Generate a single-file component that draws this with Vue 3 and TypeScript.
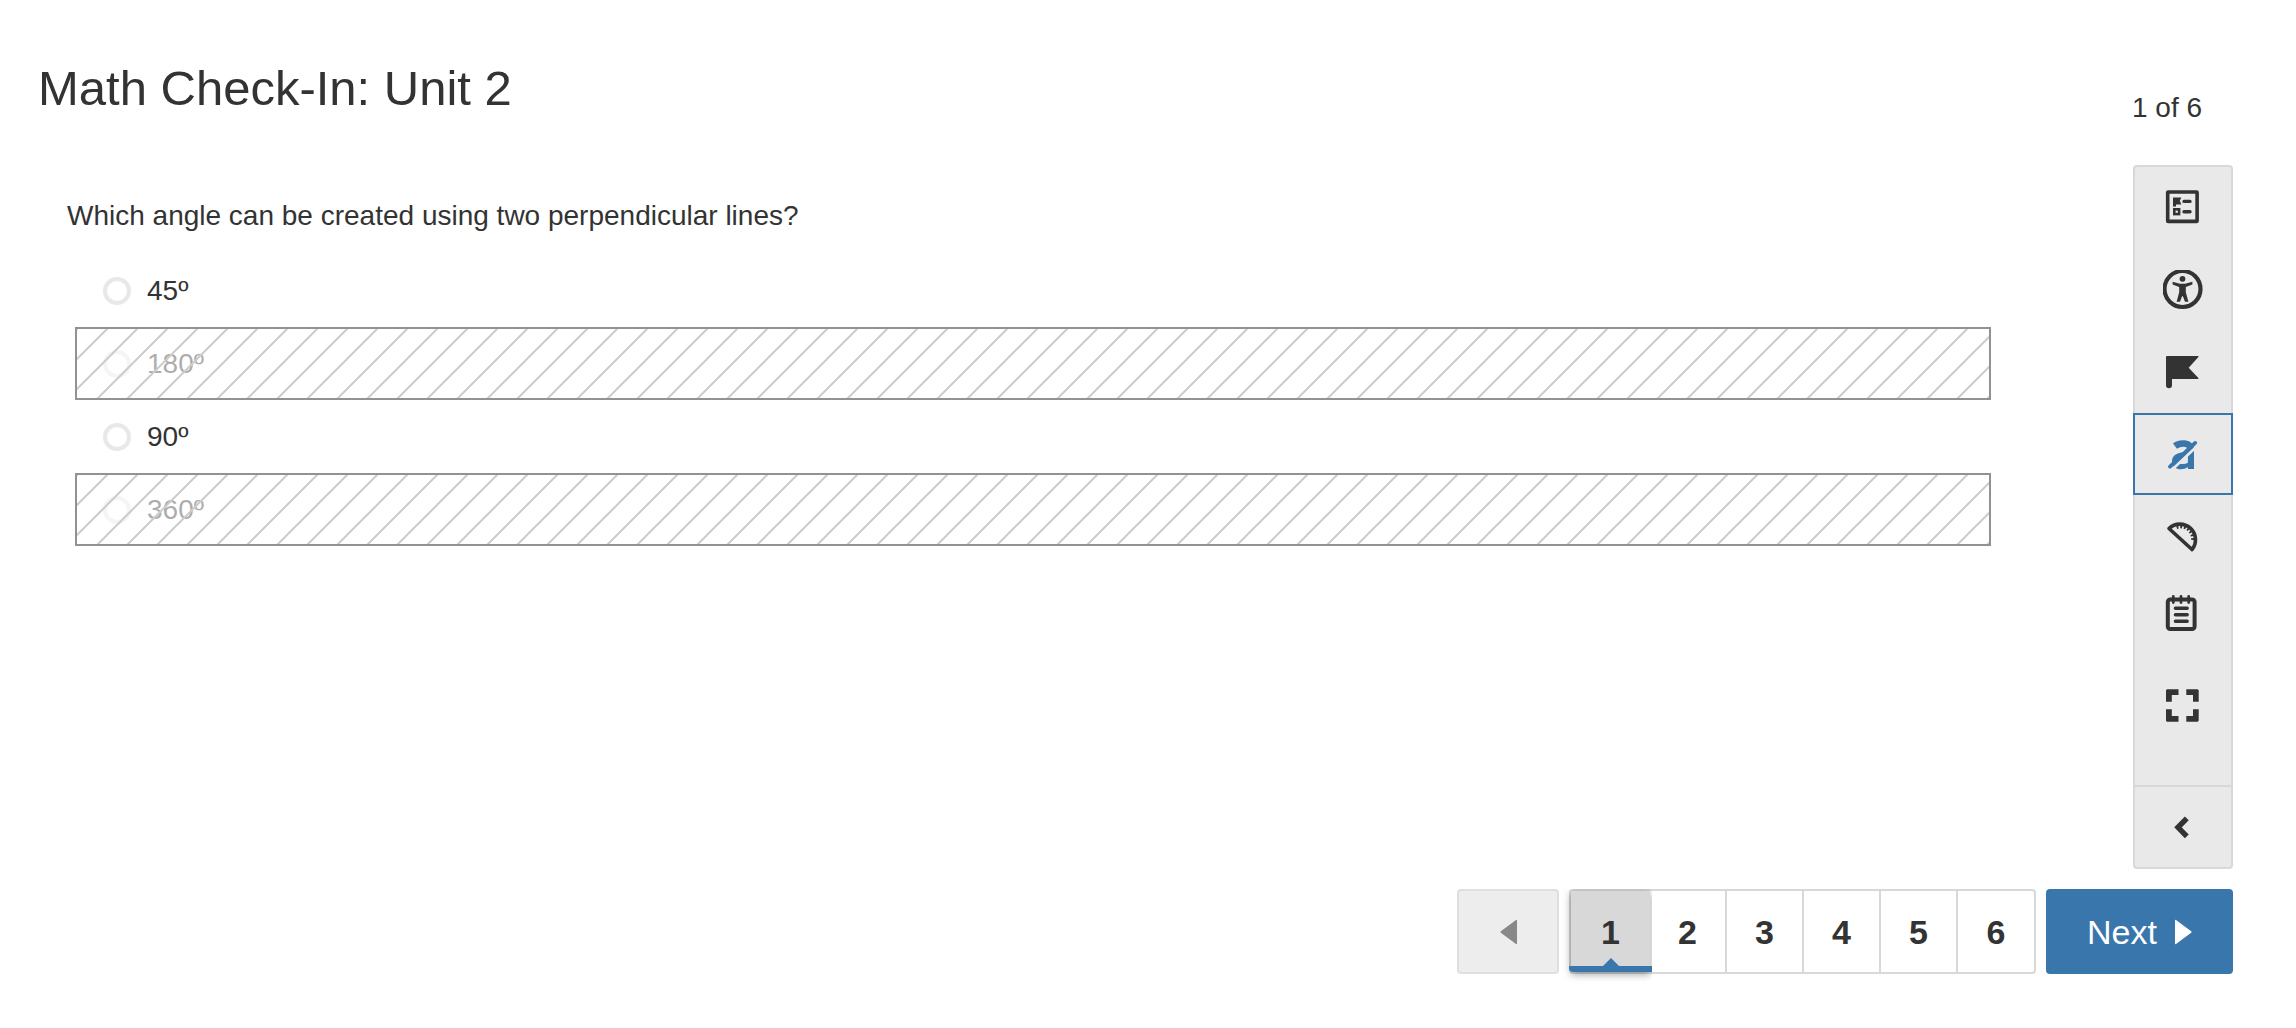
<script setup lang="ts">
import { ref } from 'vue'

interface Option {
  label: string
  eliminated: boolean
}

const options: Option[] = [
  { label: '45º', eliminated: false },
  { label: '180º', eliminated: true },
  { label: '90º', eliminated: false },
  { label: '360º', eliminated: true },
]

const total = 6
const current = ref(1)
const answer = ref('')
const eliminating = ref(true)
</script>

<template>
  <div class="page">
    <header class="header">
      <h1 class="title">Math Check-In: Unit 2</h1>
      <p class="progress">{{ current }} of {{ total }}</p>
    </header>

    <div class="body">
      <main class="question">
        <p id="prompt" class="prompt">Which angle can be created using two perpendicular lines?</p>
        <div class="options" role="radiogroup" aria-labelledby="prompt">
          <label
            v-for="(option, i) in options"
            :key="option.label"
            class="option"
            :class="{ eliminated: option.eliminated }"
          >
            <input
              v-model="answer"
              class="radio"
              type="radio"
              name="answer"
              :value="option.label"
              :disabled="option.eliminated"
            />
            <span class="option-text">{{ option.label }}</span>
            <svg v-if="option.eliminated" class="hatch" aria-hidden="true">
              <defs>
                <pattern :id="'hatch-' + i" width="30" height="30" patternUnits="userSpaceOnUse">
                  <path d="M-3 33L33 -3M-3 3L3 -3M27 33L33 27" stroke="#ccc" stroke-width="2" />
                </pattern>
              </defs>
              <rect width="100%" height="100%" :fill="'url(#hatch-' + i + ')'" />
            </svg>
          </label>
        </div>
      </main>

      <aside class="tools" aria-label="Tools">
        <button class="tool" type="button" aria-label="Review">
          <svg class="icon" viewBox="0 1 40 40">
            <rect x="4.7" y="5" width="29.4" height="29.4" rx="0.5" fill="none" stroke="currentColor" stroke-width="3.6" />
            <path d="M10 10.6h8.4l-1.6 3.200 1.600 3.600h-5.400v2.200H10z" fill="currentColor" />
            <path d="M21 14.400h6M21 24.800h6" stroke="currentColor" stroke-width="3.400" stroke-linecap="round" />
            <rect x="11.300" y="22.300" width="4.800" height="4.800" fill="none" stroke="currentColor" stroke-width="2.600" />
          </svg>
        </button>
        <button class="tool" type="button" aria-label="Accessibility">
          <svg class="icon" viewBox="0 1 40 40">
            <circle cx="19.5" cy="20" r="18" fill="none" stroke="currentColor" stroke-width="4.200" />
            <circle cx="19.5" cy="9.8" r="2.900" fill="currentColor" />
            <path d="M9.600 12.800l7.200 1.900h5.400l7.200-1.900v2.800L22.800 18v5.200l2.600 9.500h-3.400L19.900 27.200h-.8l-2.100 5.500h-3.400l2.600-9.500V18l-6.600-2.400z" fill="currentColor" />
          </svg>
        </button>
        <button class="tool" type="button" aria-label="Flag">
          <svg class="icon" viewBox="0 1 40 40">
            <path d="M4 5h31q1 0 .4 .9L25.7 16.7l9.7 10.4q.6 .9-.4 .9H9v6.2a3 3 0 0 1-6 0V6q0-1 1-1z" fill="currentColor" />
          </svg>
        </button>
        <button
          class="tool"
          :class="{ active: eliminating }"
          type="button"
          aria-label="Eliminate answers"
          :aria-pressed="eliminating"
          @click="eliminating = !eliminating"
        >
          <svg class="icon" viewBox="0 0 40 40">
            <path d="M10 9.500C14 5 31 3.800 31 15v20h-6l-.4-2C20.500 36.700 9 36.500 9 27.500 9 20.500 15 18 24.900 18V16c0-4-6.600-4.500-10.900-1.200z" fill="currentColor" />
            <path d="M16.500 29.500q4.500 1.500 8.400-.8V21z" fill="#e9e9e9" />
            <path d="M9.500 35.300L35 11.300" stroke="#e9e9e9" stroke-width="2.600" />
            <path d="M7 32.600L32.200 8.900" stroke="currentColor" stroke-width="3.800" stroke-linecap="round" />
          </svg>
        </button>
        <button class="tool" type="button" aria-label="Protractor">
          <svg class="icon" viewBox="0 0 40 40">
            <path d="M6 12.500A15.600 15.600 0 0 1 29 33.500z" fill="none" stroke="currentColor" stroke-width="3.600" stroke-linejoin="round" />
            <path d="M13.500 11A12.500 12.500 0 0 1 29.800 25.500" fill="none" stroke="currentColor" stroke-width="4" stroke-dasharray="1.900 1.900" />
          </svg>
        </button>
        <button class="tool compact" type="button" aria-label="Notepad">
          <svg class="icon" viewBox="0 0 40 40">
            <rect x="4.800" y="6.500" width="26.800" height="29.500" rx="2.500" fill="none" stroke="currentColor" stroke-width="4" />
            <path d="M10.300 3.500v6M18 3.500v6M25.700 3.500v6" stroke="currentColor" stroke-width="2.800" stroke-linecap="round" />
            <path d="M12.400 15.300h11.800M12.400 21.700h11.800M12.400 28.300h11.800" stroke="currentColor" stroke-width="3.400" stroke-linecap="round" />
          </svg>
        </button>
        <button class="tool spaced" type="button" aria-label="Full screen">
          <svg class="icon" viewBox="0 0 40 40">
            <path d="M4 3.300h11.500V9H8.800v6.800H3V4.300zM23.300 3.300h11.400l1 1v11.500H30V9h-6.700zM3 23.300h5.800V30h6.700v5.700H4l-1-1zM30 23.300h5.700v11.400l-1 1H23.300V30H30z" fill="currentColor" />
          </svg>
        </button>
        <button class="tool collapse" type="button" aria-label="Collapse tools">
          <svg class="icon" viewBox="0 0 40 40">
            <path d="M23.800 11.300L15 20.300l8.800 9" fill="none" stroke="currentColor" stroke-width="5.400" />
          </svg>
        </button>
      </aside>
    </div>

    <nav class="pager" aria-label="Questions">
      <button class="prev" type="button" aria-label="Previous" disabled>
        <svg class="arrow" viewBox="0 0 17 26"><path d="M17 1.500v23q0 1-1 .5L.8 13.800q-.8-.8 0-1.600L16 1q1-.5 1 .5z" fill="#888" /></svg>
      </button>
      <ol class="pages">
        <li v-for="n in total" :key="n" class="cell">
          <button class="number" :class="{ current: n === current }" type="button" @click="current = n">{{ n }}</button>
        </li>
      </ol>
      <button class="next" type="button">
        Next
        <svg class="arrow" viewBox="0 0 17 26"><path d="M0 1.500v23q0 1 1 .5l15.200-11.200q.8-.8 0-1.600L1 1Q0 .5 0 1.500z" fill="#fff" /></svg>
      </button>
    </nav>
  </div>
</template>

<style>
body {
  margin: 0;
  background: #fff;
}
</style>

<style scoped>
.page {
  padding: 60px 63px 54px 38px;
  color: #333;
  font-family: "Liberation Sans", Arial, sans-serif;
  font-size: 28px;
  line-height: 32px;
}

.page * {
  box-sizing: border-box;
}

button {
  margin: 0;
  padding: 0;
  border: 0;
  background: none;
  color: inherit;
  font: inherit;
  cursor: pointer;
}

.header {
  display: flex;
  justify-content: space-between;
  align-items: flex-end;
}

.title {
  margin: 0 0 8px;
  font-size: 49px;
  font-weight: 400;
  line-height: 56px;
}

.progress {
  width: 101px;
  margin: 0;
}

.body {
  display: flex;
  gap: 142px;
  margin-top: 41px;
}

.question {
  flex: 1;
  min-width: 0;
  padding: 35px 0 0 37px;
}

.prompt {
  margin: 0 0 22px -8px;
}

.option {
  position: relative;
  display: flex;
  align-items: center;
  gap: 16px;
  height: 73px;
  padding: 0 28px;
}

.eliminated {
  border: 2px solid #929292;
  padding: 0 26px;
}

.eliminated .radio,
.eliminated .option-text {
  opacity: 0.4;
}

.radio {
  appearance: none;
  width: 28px;
  height: 28px;
  margin: 0;
  border: 4px solid #e7e8ea;
  border-radius: 50%;
  background: #fff;
}

.radio:checked {
  border-color: #3876ab;
}

.hatch {
  position: absolute;
  inset: 0;
  width: 100%;
  height: 100%;
  pointer-events: none;
}

.tools {
  display: flex;
  flex-direction: column;
  width: 100px;
  border: 2px solid #d8d8d8;
  border-radius: 4px;
  background: #e9e9e9;
}

.tool {
  display: flex;
  align-items: center;
  justify-content: center;
  height: 82px;
}

.compact {
  height: 72px;
}

.spaced {
  margin: 16px 0 38px;
}

.active {
  margin: 0 -2px;
  border: 2px solid #3876ab;
  color: #3876ab;
}

.collapse {
  border-top: 2px solid #d8d8d8;
}

.icon {
  width: 40px;
  height: 40px;
}

.pager {
  display: flex;
  justify-content: flex-end;
  gap: 10px;
  margin-top: 20px;
  font-size: 34px;
}

.prev,
.next {
  display: flex;
  align-items: center;
  justify-content: center;
  height: 85px;
  border-radius: 4px;
}

.prev {
  width: 102px;
  border: 2px solid #dfdfdf;
  background: #ededed;
}

.next {
  gap: 18px;
  width: 187px;
  background: #3876ab;
  color: #fff;
}

.arrow {
  width: 17px;
  height: 26px;
}

.pages {
  display: flex;
  height: 85px;
  margin: 0;
  padding: 0;
  border: 2px solid #d8d8d8;
  border-radius: 4px;
  list-style: none;
}

.cell {
  width: 77px;
}

.cell + .cell {
  border-right: 2px solid #d8d8d8;
}

.cell:last-child {
  width: 76px;
  border-right: 0;
}

.cell:first-child {
  width: 79px;
}

.number {
  width: 100%;
  height: 100%;
  font-weight: 700;
}

.current {
  position: relative;
  background: #d8d8d8;
  box-shadow: 0 2px 8px rgba(0, 0, 0, 0.4);
  clip-path: inset(-2px -2px -12px -12px);
}

.current::before {
  content: "";
  position: absolute;
  right: -2px;
  bottom: 0;
  left: -2px;
  height: 6px;
  border-bottom-left-radius: 4px;
  background: #3876ab;
}

.current::after {
  content: "";
  position: absolute;
  bottom: 6px;
  left: calc(50% - 8px);
  border: 8px solid transparent;
  border-top-width: 0;
  border-bottom-color: #3876ab;
}
</style>
